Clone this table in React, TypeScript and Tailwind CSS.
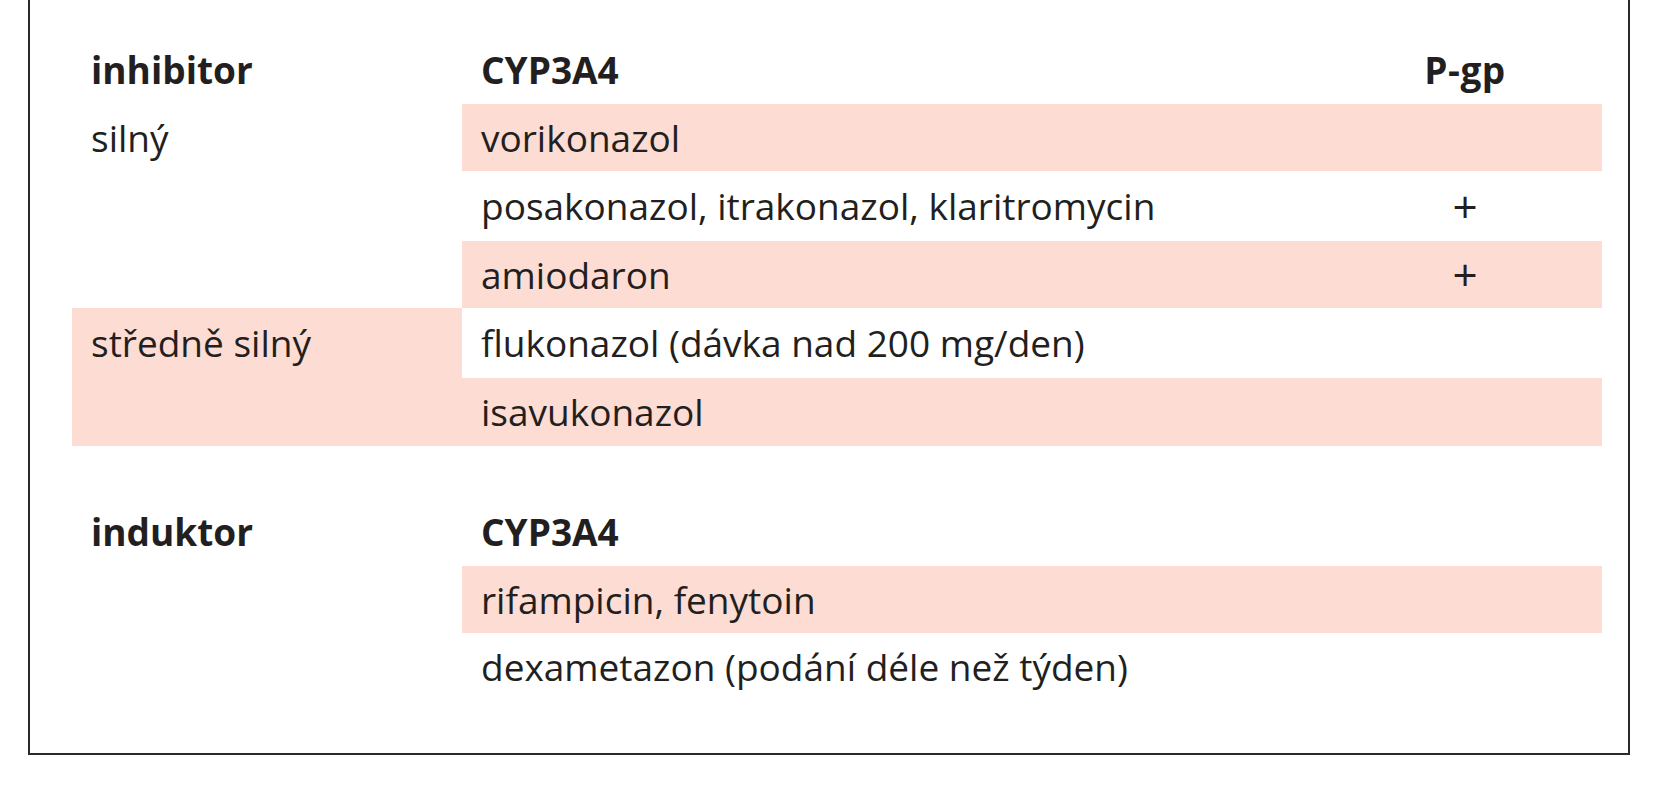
import React from "react";

const PINK = "bg-[#fddcd3]";

export default function App() {
  return (
    <div className="w-[1676px] h-[800px] bg-white overflow-hidden" style={{ fontFamily: '"Open Sans", "Noto Sans", sans-serif' }}>
      <div className="ml-[28px] w-[1602px] h-[755px] border-x-2 border-b-2 border-t-0 border-[#2a2a2a] pt-[36px] pl-[42px] pr-[26px] text-[#231f20] text-[37px]">
        {/* inhibitor section */}
        <div className="grid grid-cols-[390px_866px_274px] grid-rows-[68px_67px_70px_67px_70px_68px]">
          <div className="pl-[19px] font-bold leading-[68px]">inhibitor</div>
          <div className="pl-[19px] font-bold leading-[68px]">CYP3A4</div>
          <div className="text-center font-bold leading-[68px] tracking-[0.5px]">P-gp</div>

          <div className="row-span-3 pl-[19px] leading-[67px]">silný</div>
          <div className={`col-span-2 ${PINK} pl-[19px] leading-[67px]`}>vorikonazol</div>

          <div className="pl-[19px] leading-[70px]">posakonazol, itrakonazol, klaritromycin</div>
          <div className="text-center leading-[70px] text-[44px]">+</div>

          <div className={`${PINK} pl-[19px] leading-[67px]`}>amiodaron</div>
          <div className={`${PINK} text-center leading-[67px] text-[44px]`}>+</div>

          <div className={`row-span-2 ${PINK} pl-[19px] leading-[70px]`}>středně silný</div>
          <div className="col-span-2 pl-[19px] leading-[70px]">flukonazol (dávka nad 200 mg/den)</div>
          <div className={`col-span-2 ${PINK} pl-[19px] leading-[68px]`}>isavukonazol</div>
        </div>

        {/* induktor section */}
        <div className="mt-[51px] grid grid-cols-[390px_866px_274px] grid-rows-[69px_67px_68px]">
          <div className="pl-[19px] font-bold leading-[69px]">induktor</div>
          <div className="pl-[19px] font-bold leading-[69px]">CYP3A4</div>
          <div></div>

          <div className="row-span-2"></div>
          <div className={`col-span-2 ${PINK} pl-[19px] leading-[67px]`}>rifampicin, fenytoin</div>
          <div className="col-span-2 pl-[19px] leading-[68px]">dexametazon (podání déle než týden)</div>
        </div>
      </div>
    </div>
  );
}
